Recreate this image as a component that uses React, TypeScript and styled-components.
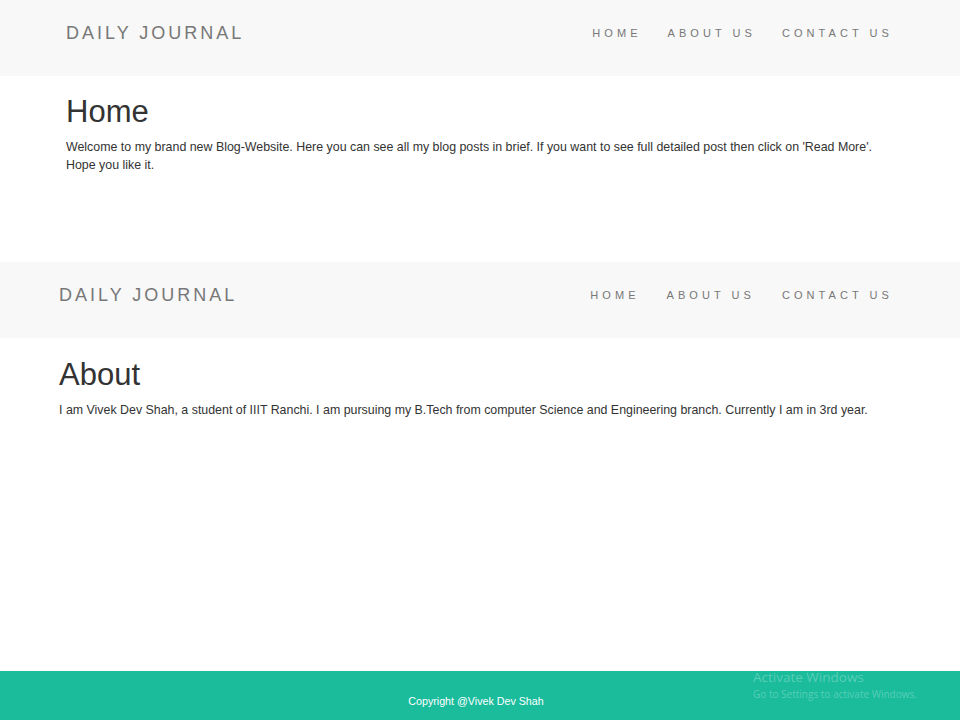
import React from "react";
import styled, { createGlobalStyle } from "styled-components";

const Global = createGlobalStyle`
  html, body { margin: 0; padding: 0; background: #fff; }
  body { font-family: "Liberation Sans", Arial, sans-serif; color: #333; }
`;

const Page = styled.div`
  min-height: 720px;
  display: flex;
  flex-direction: column;
  position: relative;
`;

const NavBar = styled.nav<{ $inset: number; $right: number }>`
  height: 76px;
  background: #f8f8f8;
  display: flex;
  align-items: center;
  justify-content: space-between;
  padding: 0 ${(p) => p.$right}px 10px ${(p) => p.$inset}px;
  box-sizing: border-box;
`;

const Brand = styled.a`
  font-size: 18px;
  letter-spacing: 3px;
  color: #777;
  text-decoration: none;
`;

const NavList = styled.ul<{ $gap: number }>`
  list-style: none;
  margin: 0;
  padding: 0 0 2px;
  display: flex;
  gap: ${(p) => p.$gap}px;
`;

const NavLink = styled.a`
  font-size: 11px;
  letter-spacing: 4.05px;
  color: #777;
  text-decoration: none;
`;

const Section = styled.section<{ $inset: number; $height: number }>`
  padding: 0 66px 0 ${(p) => p.$inset}px;
  height: ${(p) => p.$height}px;
  box-sizing: border-box;
`;

const Title = styled.h1<{ $top: number }>`
  font-size: 31px;
  font-weight: 400;
  margin: ${(p) => p.$top}px 0 0;
  line-height: 40px;
  color: #333;
`;

const Text = styled.p`
  font-size: 12.4px;
  line-height: 18px;
  margin: 6px 0 0;
  color: #333;
`;

const Spacer = styled.div`
  flex: 1;
`;

const Footer = styled.footer`
  height: 49px;
  background: #1abc9c;
  display: flex;
  align-items: center;
  justify-content: center;
  padding: 10px 8px 0 0;
  box-sizing: border-box;
  color: #fff;
  font-size: 10.7px;
`;

const Watermark = styled.div`
  position: absolute;
  left: 753px;
  top: 669px;
  color: rgba(255, 255, 255, 0.28);
  font-family: "Open Sans", "Liberation Sans", sans-serif;
`;

const WmTitle = styled.div`
  font-size: 13.5px;
  line-height: 17px;
`;

const WmSub = styled.div`
  font-size: 10px;
  line-height: 14px;
  margin-top: 1px;
`;

function Header({ inset, gap }: { inset: number; gap: number }) {
  return (
    <NavBar $inset={inset} $right={67}>
      <Brand href="#">DAILY JOURNAL</Brand>
      <NavList $gap={gap}>
        <li><NavLink href="#">HOME</NavLink></li>
        <li><NavLink href="#">ABOUT US</NavLink></li>
        <li><NavLink href="#">CONTACT US</NavLink></li>
      </NavList>
    </NavBar>
  );
}

export default function App() {
  return (
    <Page>
      <Global />
      <Header inset={66} gap={26} />
      <Section $inset={66} $height={186}>
        <Title $top={16}>Home</Title>
        <Text>
          Welcome to my brand new Blog-Website. Here you can see all my blog posts in brief. If you want to see full detailed post then click on 'Read More'.
          Hope you like it.
        </Text>
      </Section>
      <Header inset={59} gap={27} />
      <Section $inset={59} $height={100}>
        <Title $top={17}>About</Title>
        <Text>
          I am Vivek Dev Shah, a student of IIIT Ranchi. I am pursuing my B.Tech from computer Science and Engineering branch. Currently I am in 3rd year.
        </Text>
      </Section>
      <Spacer />
      <Footer>Copyright @Vivek Dev Shah</Footer>
      <Watermark>
        <WmTitle>Activate Windows</WmTitle>
        <WmSub>Go to Settings to activate Windows.</WmSub>
      </Watermark>
    </Page>
  );
}
